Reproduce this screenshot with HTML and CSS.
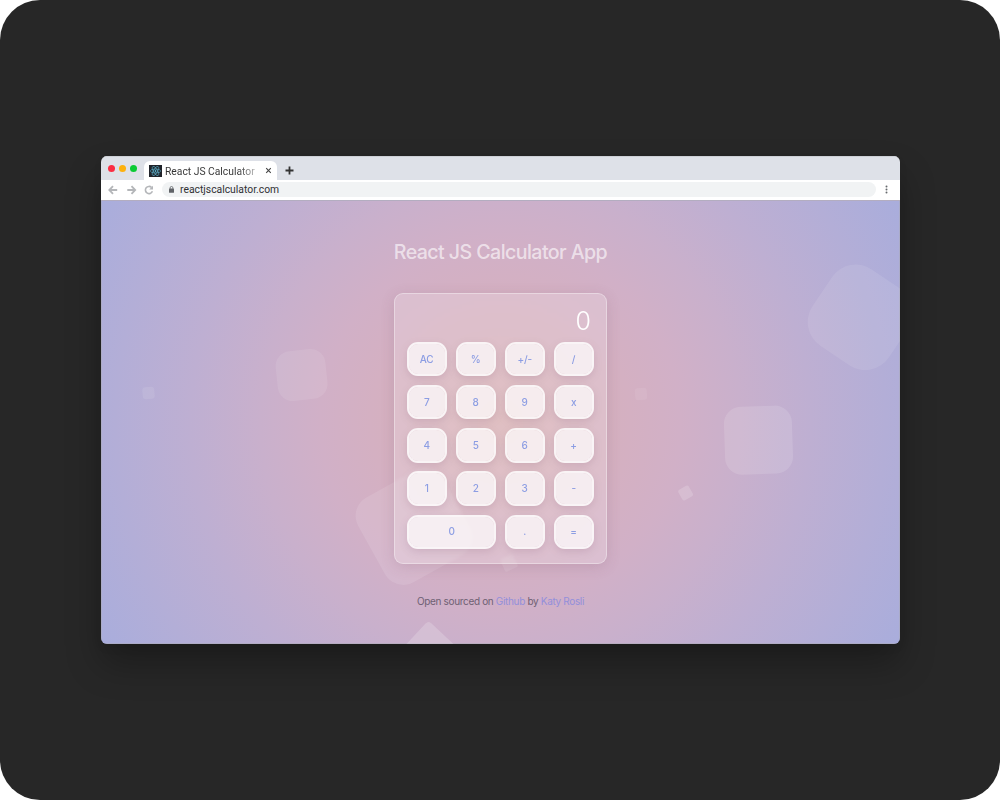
FILE: index.html
```html
<!DOCTYPE html>
<html lang="en">
<head>
<meta charset="utf-8">
<title>React JS Calculator</title>
<link rel="stylesheet" href="styles.css">
</head>
<body>
<div class="stage">
  <div class="window">
    <div class="tabstrip">
      <div class="lights"><i class="light red"></i><i class="light yellow"></i><i class="light green"></i></div>
      <div class="tab">
        <svg class="favicon" width="13" height="12" viewBox="0 0 13 12"><rect width="13" height="12" fill="#20232a"/><g fill="none" stroke="#58a5bd" stroke-width=".7"><ellipse cx="6.5" cy="6" rx="5.2" ry="2"/><ellipse cx="6.5" cy="6" rx="5.2" ry="2" transform="rotate(60 6.5 6)"/><ellipse cx="6.5" cy="6" rx="5.2" ry="2" transform="rotate(120 6.5 6)"/></g><circle cx="6.5" cy="6" r=".9" fill="#58b5cf"/></svg>
        <span class="tab-title">React JS Calculator</span>
        <svg class="close" width="7" height="7" viewBox="0 0 7 7"><path d="M1.2 1.2l4.6 4.6M5.8 1.2L1.2 5.8" stroke="#444" stroke-width="1.1"/></svg>
      </div>
      <svg class="plus" width="9" height="9" viewBox="0 0 9 9"><path d="M4.5 .5v8M.5 4.5h8" stroke="#333" stroke-width="1.8"/></svg>
    </div>
    <div class="toolbar">
      <svg class="nav" width="10" height="10" viewBox="0 0 10 10"><path d="M9.2 5H1.4M5 1.2L1.3 5L5 8.8" fill="none" stroke="#b4b6b9" stroke-width="1.8"/></svg>
      <svg class="nav" width="10" height="10" viewBox="0 0 10 10"><path d="M.3 5h7.8M4.5 1.2L8.2 5L4.5 8.8" fill="none" stroke="#b4b6b9" stroke-width="1.8"/></svg>
      <svg class="nav reload" width="10" height="10" viewBox="0 0 10 10"><path d="M8.4 6.3A3.6 3.6 0 1 1 7.6 2.5" fill="none" stroke="#b4b6b9" stroke-width="1.6"/><path d="M9 .7v3.8H5.2z" fill="#b4b6b9"/></svg>
      <div class="address">
        <svg width="5" height="7" viewBox="0 0 5 7"><path d="M1.1 3V1.9a1.4 1.4 0 0 1 2.8 0V3" fill="none" stroke="#606368" stroke-width=".8"/><rect y="2.6" width="5" height="4.2" rx=".6" fill="#606368"/></svg>
        <span>reactjscalculator.com</span>
      </div>
      <svg class="more" width="3" height="9" viewBox="0 0 3 9"><g fill="#66696d"><circle cx="1.5" cy="1.5" r="1"/><circle cx="1.5" cy="4.5" r="1"/><circle cx="1.5" cy="7.5" r="1"/></g></svg>
    </div>
    <main class="page">
      <svg class="shapes" width="799" height="444" viewBox="101 200 799 444" fill="#fff">
        <rect x="-25" y="-25" width="50" height="50" rx="15" transform="translate(301.6 375) rotate(-6)" opacity=".09"/>
        <rect x="-6" y="-6" width="12" height="12" rx="3" transform="translate(148.5 393) rotate(-5)" opacity=".09"/>
        <rect x="-6" y="-6" width="12" height="12" rx="3" transform="translate(641 394) rotate(-5)" opacity=".07"/>
        <rect x="-34" y="-34" width="68" height="68" rx="17" transform="translate(758.5 440.2) rotate(-2)" opacity=".13"/>
        <rect x="-46" y="-46" width="92" height="92" rx="28.5" transform="translate(860.5 317.3) rotate(34)" opacity=".09"/>
        <rect x="-48.5" y="-48.5" width="97" height="97" rx="21" transform="translate(414 526.5) rotate(-29)" opacity=".11"/>
        <rect x="-6" y="-6" width="12" height="12" rx="2" transform="translate(685.6 493) rotate(-30)" opacity=".17"/>
        <rect x="-7" y="-7" width="14" height="14" rx="2" transform="translate(509 563) rotate(-25)" opacity=".1"/>
        <rect x="-30" y="-30" width="60" height="60" rx="4" transform="translate(429.8 663) rotate(43)" opacity=".19"/>
      </svg>
      <h1 class="title">React JS Calculator App</h1>
      <section class="calculator">
        <div class="screen">0</div>
        <div class="keys">
          <button>AC</button><button>%</button><button>+/-</button><button>/</button>
          <button>7</button><button>8</button><button>9</button><button>x</button>
          <button>4</button><button>5</button><button>6</button><button>+</button>
          <button>1</button><button>2</button><button>3</button><button>-</button>
          <button class="wide">0</button><button>.</button><button>=</button>
        </div>
      </section>
      <p class="credit">Open sourced on <a>Github</a> by <a>Katy Rosli</a></p>
    </main>
  </div>
</div>
</body>
</html>
```
FILE: styles.css
```css
* { box-sizing: border-box; }
body { margin: 0; background: #fff; font-family: Inter, "Liberation Sans", sans-serif; }
.stage { width: 1000px; height: 800px; border-radius: 40px; background: #272727; display: flex; justify-content: center; padding: 156px 0 0 1px; }
.window { width: 799px; height: 488px; border-radius: 6px; overflow: hidden; display: flex; flex-direction: column; box-shadow: 0 20px 35px rgba(0, 0, 0, .28), 0 4px 10px rgba(0, 0, 0, .05); }
.tabstrip { height: 24px; flex: none; background: #dee1e8; box-shadow: inset 0 1px #cdd0d6; display: flex; align-items: flex-end; font-family: Roboto, sans-serif; }
.lights { display: flex; gap: 4px; padding: 0 7px 8px 7px; }
.light { width: 7px; height: 7px; border-radius: 50%; }
.red { background: #fb2d43; }
.yellow { background: #fdb10d; }
.green { background: #0bcb35; }
.tab { width: 133px; height: 19px; border-radius: 6px 6px 0 0; background: #fff; display: flex; align-items: center; padding: 1px 5px 0 5px; }
.tab-title { margin: 1px 0 0 3px; width: 91px; font-size: 10.3px; line-height: 14px; white-space: nowrap; overflow: hidden; color: transparent; background: linear-gradient(90deg, #333 80%, #bbb 100%); background-clip: text; -webkit-background-clip: text; }
.close { margin: 0 0 1px auto; }
.plus { margin: 0 0 5px 8px; }
.toolbar { height: 20px; flex: none; background: #fff; display: flex; align-items: center; padding: 0 12px 1px 7px; font-family: Roboto, sans-serif; }
.nav { margin-right: 9px; }
.nav.reload { margin: 0 8px 0 -2px; }
.address { flex: 1; height: 15px; border-radius: 8px; background: #f1f3f4; display: flex; align-items: center; gap: 6px; padding-left: 7px; margin-right: 9px; font-size: 10.35px; color: #303134; }
.page { position: relative; flex: 1; display: flex; flex-direction: column; align-items: center; box-shadow: inset 0 1px #b3adc0, inset 1px 0 rgba(170, 170, 180, .5), inset -1px -1px rgba(170, 170, 180, .5); background: radial-gradient(circle at 50% 50%, #d8b0b3 0, #d6b0b9 60px, #d4b0c2 130px, #d1b0c7 180px, #c9b0cc 240px, #beafd2 310px, #b3aed7 385px, #a9addc 456px); }
.shapes { position: absolute; left: 0; top: 0; }
.title, .calculator, .credit { position: relative; }
.title { margin: 39px 0 0; height: 54px; font-size: 19.6px; line-height: 26px; font-weight: 500; color: rgba(255, 255, 255, .62); letter-spacing: -.57px; white-space: nowrap; }
.calculator { width: 213px; height: 271px; border: 1px solid rgba(255, 255, 255, .35); border-radius: 9px; background: rgba(255, 255, 255, .2); backdrop-filter: blur(1.5px); box-shadow: 0 3px 14px rgba(110, 70, 100, .17); padding: 12px 12px 0 12.3px; }
.screen { height: 36.2px; padding-right: 3px; text-align: right; color: #fff; font-size: 25px; line-height: 31px; font-weight: 300; }
.keys { display: grid; grid-template-columns: repeat(4, 39.7px); grid-auto-rows: 34.2px; gap: 8.9px 9.3px; }
.keys button { padding: 0 1px 1px 0; border: 2px solid rgba(255, 255, 255, .82); border-radius: 11px; background: rgba(255, 255, 255, .7); background-clip: padding-box; box-shadow: 0 3px 8px rgba(110, 70, 100, .16); color: #8c9de3; font: 500 10px Inter, sans-serif; letter-spacing: -.2px; }
.keys .wide { grid-column: span 2; padding-left: 1px; }
.credit { margin: 30px 0 0; font-size: 10px; line-height: 14px; color: #6e6073; letter-spacing: -.34px; white-space: nowrap; }
.credit a { color: #938fdb; }
```
